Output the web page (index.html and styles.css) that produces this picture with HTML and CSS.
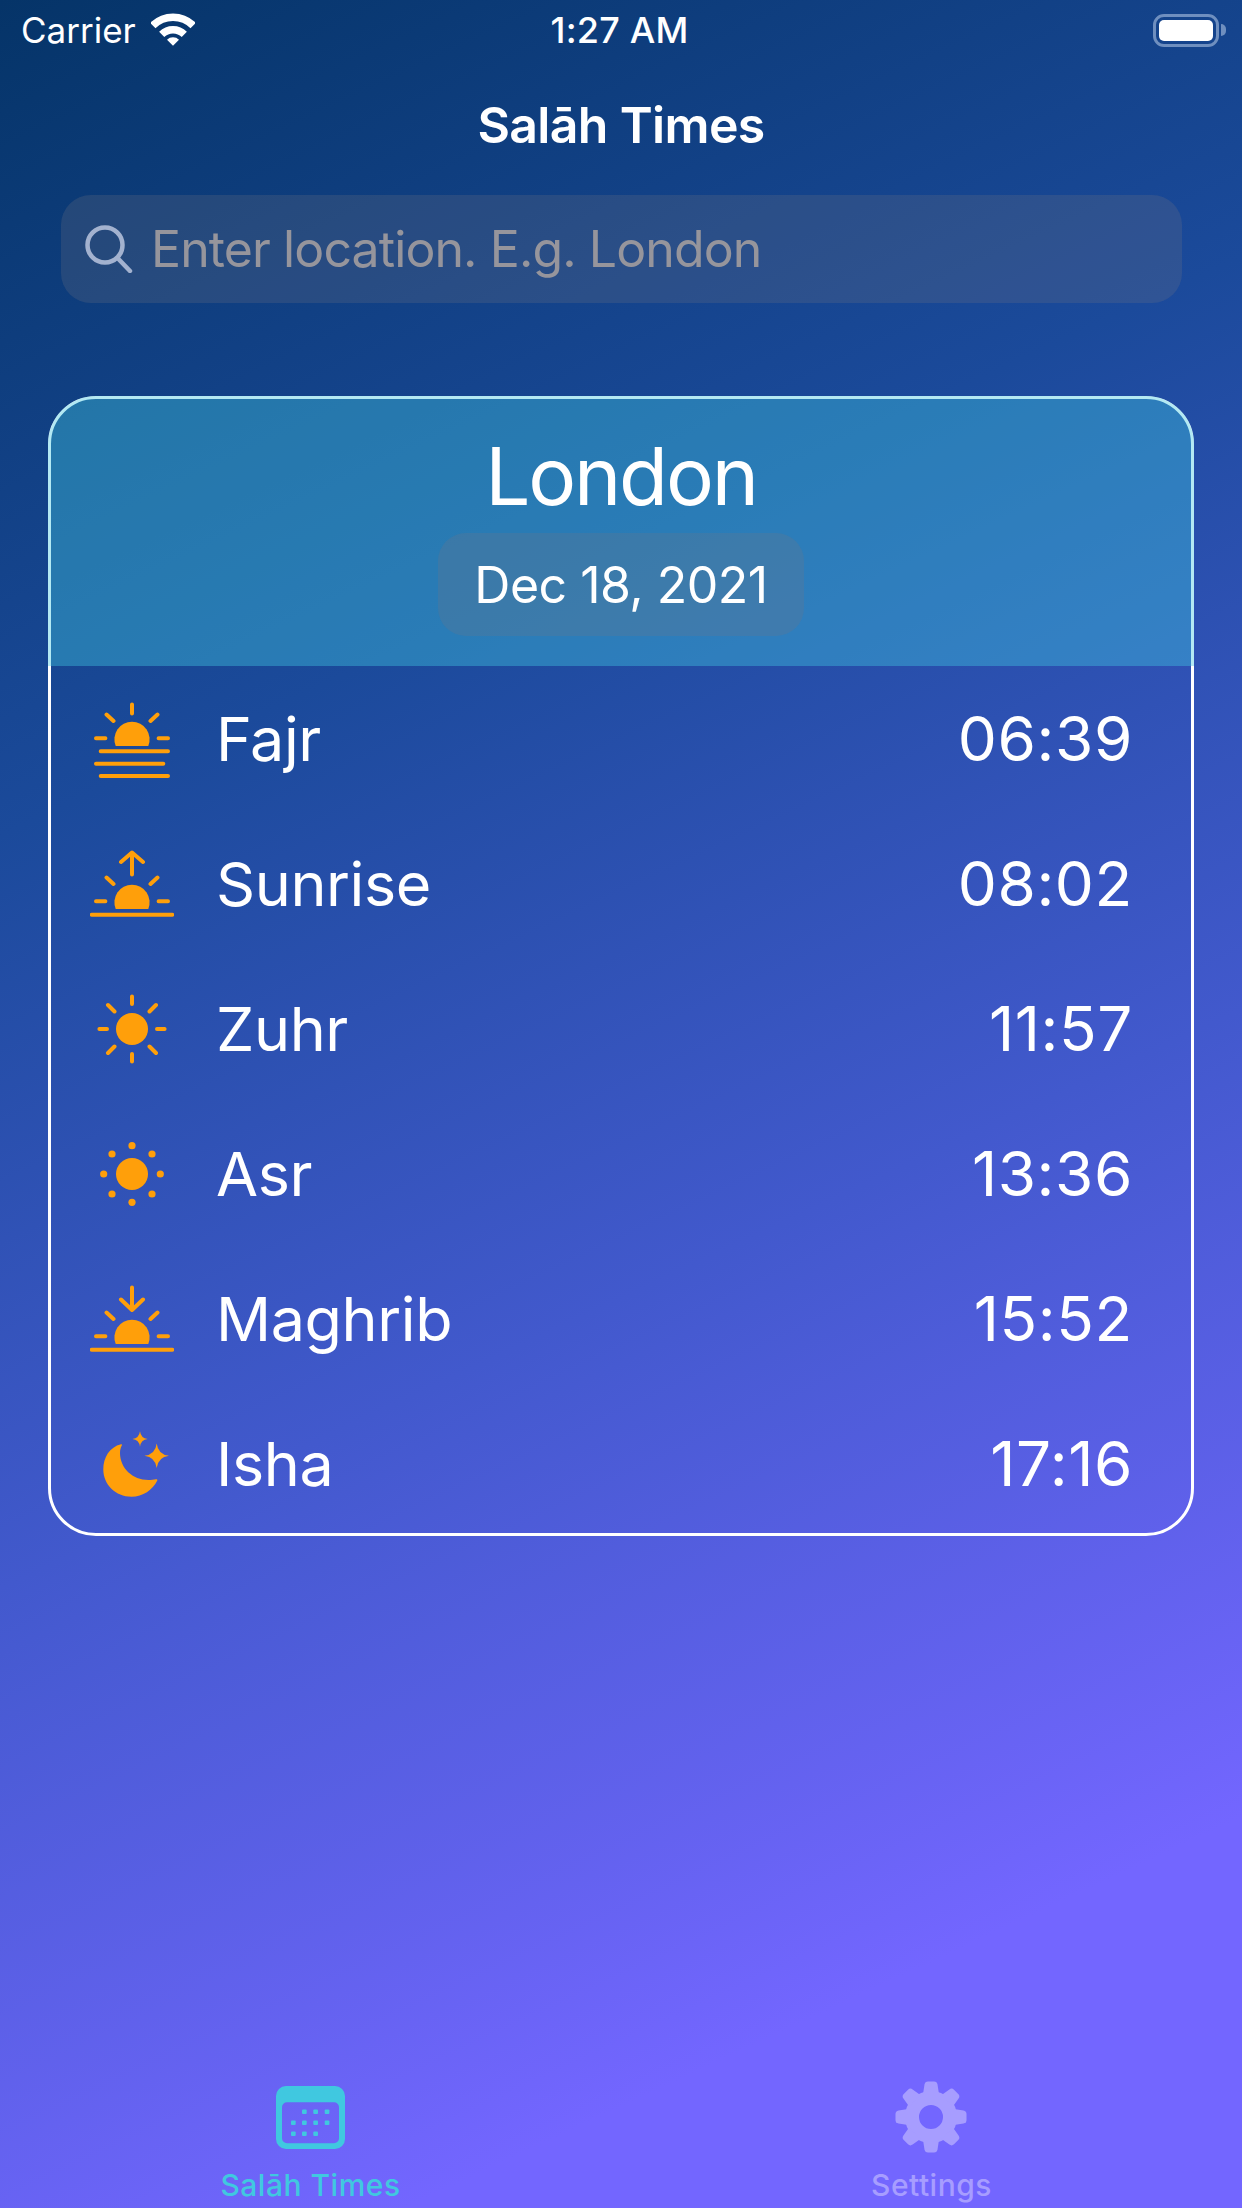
FILE: index.html

```html
<!DOCTYPE html>
<html lang="en">
<head>
  <meta charset="UTF-8">
  <meta name="viewport" content="width=device-width, initial-scale=1.0">
  <title>Salāh Times</title>
  <link rel="stylesheet" href="styles.css">
</head>
<body>
  <div class="status-bar">
    <div class="status-left">
      <span class="carrier">Carrier</span>
      <svg class="wifi" viewBox="0 0 44 33" width="44" height="33">
        <path class="wifi-arc" stroke-width="7.5" d="M1.85 12.55A28.5 28.5 0 0 1 42.15 12.55"/>
        <path class="wifi-arc" stroke-width="7.3" d="M10.7 21.4A16 16 0 0 1 33.3 21.4"/>
        <path class="wifi-dot" d="M22 32.7L16 26.7A8.5 8.5 0 0 1 28 26.7Z"/>
      </svg>
    </div>
    <span class="clock">1:27 AM</span>
    <div class="status-right">
      <div class="battery"><div class="battery-level"></div></div>
      <div class="battery-nub"></div>
    </div>
  </div>

  <header class="nav-title">Salāh Times</header>

  <div class="search">
    <svg class="search-icon" viewBox="0 0 50 48" width="50" height="48">
      <circle cx="22" cy="20" r="17.5"/>
      <path d="M34.5 33L47 46"/>
    </svg>
    <span class="search-text">Enter location. E.g. London</span>
  </div>

  <section class="card">
    <div class="card-head">
      <h1 class="city">London</h1>
      <div class="date">Dec 18, 2021</div>
    </div>

    <div class="row">
      <svg class="prayer-icon" viewBox="0 0 84 84" width="84" height="84">
        <path class="sun" d="M25.7 49A17.6 17.6 0 1 1 58.3 49Z"/>
        <path class="ray" d="M42 7.5V16.5M6 41.3H15.4M68.6 41.3H78M16.5 17.5L23.5 24M67.5 17.5L60.5 24M10.7 54.3H78M6 66.7H73.3M10.7 79H78"/>
      </svg>
      <span class="name">Fajr</span>
      <span class="time">06:39</span>
    </div>

    <div class="row">
      <svg class="prayer-icon" viewBox="0 0 84 84" width="84" height="84">
        <path class="sun" d="M25.7 67A17.6 17.6 0 1 1 58.3 67Z"/>
        <path class="ray" d="M42 11V32.5M31 20L42 10.5L53 20M6 59.3H15.4M68.6 59.3H78M16.5 35.5L23.5 42M67.5 35.5L60.5 42M1.7 72.7H82.3"/>
      </svg>
      <span class="name">Sunrise</span>
      <span class="time">08:02</span>
    </div>

    <div class="row">
      <svg class="prayer-icon" viewBox="0 0 84 84" width="84" height="84">
        <circle class="sun" cx="42" cy="42" r="16"/>
        <path class="ray" d="M42 9.4V17M42 67V74.6M9.4 42H17M67 42H74.6M18 18L24.5 24.5M66 18L59.5 24.5M18 66L24.5 59.5M66 66L59.5 59.5"/>
      </svg>
      <span class="name">Zuhr</span>
      <span class="time">11:57</span>
    </div>

    <div class="row">
      <svg class="prayer-icon" viewBox="0 0 84 84" width="84" height="84">
        <circle class="sun" cx="42" cy="42" r="16"/>
        <g class="sun">
          <circle cx="42" cy="13.7" r="3.6"/>
          <circle cx="42" cy="70.3" r="3.6"/>
          <circle cx="13.7" cy="42" r="3.6"/>
          <circle cx="70.3" cy="42" r="3.6"/>
          <circle cx="22" cy="22" r="3.6"/>
          <circle cx="62" cy="22" r="3.6"/>
          <circle cx="22" cy="62" r="3.6"/>
          <circle cx="62" cy="62" r="3.6"/>
        </g>
      </svg>
      <span class="name">Asr</span>
      <span class="time">13:36</span>
    </div>

    <div class="row">
      <svg class="prayer-icon" viewBox="0 0 84 84" width="84" height="84">
        <path class="sun" d="M25.7 67A17.6 17.6 0 1 1 58.3 67Z"/>
        <path class="ray" d="M42 10.5V33M31 22.5L42 33L53 22.5M6 59.3H15.4M68.6 59.3H78M16.5 35.5L23.5 42M67.5 35.5L60.5 42M1.7 72.7H82.3"/>
      </svg>
      <span class="name">Maghrib</span>
      <span class="time">15:52</span>
    </div>

    <div class="row">
      <svg class="prayer-icon" viewBox="0 0 84 84" width="84" height="84">
        <path class="sun" d="M31 22.3C19.7 25 13.3 35.5 13.3 47.5C13.3 62.5 25.5 74.7 41.5 74.7C53 74.7 62.5 68 67.3 58.5C67.5 57.5 66.8 57 66 57.3C64 57.8 61 58 58.5 58C42.5 58 30 46 30 31C30 28 30.7 25.5 31.8 23.5C32.2 22.6 31.8 22.1 31 22.3Z"/>
        <path class="sun" d="M66.7 21.4Q68 32.4 79 33.7Q68 35 66.7 46Q65.4 35 54.4 33.7Q65.4 32.4 66.7 21.4Z"/>
        <path class="sun" d="M50 9.3Q50.8 16.2 57.7 17Q50.8 17.8 50 24.7Q49.2 17.8 42.3 17Q49.2 16.2 50 9.3Z"/>
      </svg>
      <span class="name">Isha</span>
      <span class="time">17:16</span>
    </div>
  </section>

  <nav class="tabs">
    <div class="tab tab-active">
      <div class="tab-icon">
        <svg viewBox="0 0 69 63" width="69" height="63">
          <path fill-rule="evenodd" d="M10 0H59A10 10 0 0 1 69 10V53A10 10 0 0 1 59 63H10A10 10 0 0 1 0 53V10A10 10 0 0 1 10 0ZM11 16.3A5 5 0 0 0 6 21.3V52.3A5 5 0 0 0 11 57.3H58A5 5 0 0 0 63 52.3V21.3A5 5 0 0 0 58 16.3Z"/>
          <rect x="26" y="23.4" width="4.7" height="4.7" rx="1"/>
          <rect x="37.3" y="23.4" width="4.7" height="4.7" rx="1"/>
          <rect x="48.7" y="23.4" width="4.7" height="4.7" rx="1"/>
          <rect x="15" y="34.4" width="4.7" height="4.7" rx="1"/>
          <rect x="26" y="34.4" width="4.7" height="4.7" rx="1"/>
          <rect x="37.3" y="34.4" width="4.7" height="4.7" rx="1"/>
          <rect x="48.7" y="34.4" width="4.7" height="4.7" rx="1"/>
          <rect x="15" y="45.4" width="4.7" height="4.7" rx="1"/>
          <rect x="26" y="45.4" width="4.7" height="4.7" rx="1"/>
          <rect x="37.3" y="45.4" width="4.7" height="4.7" rx="1"/>
        </svg>
      </div>
      <span class="tab-label">Salāh Times</span>
    </div>
    <div class="tab">
      <div class="tab-icon">
        <svg class="gear" viewBox="0 0 72 72" width="72" height="72">
          <circle class="gear-ring" cx="36" cy="36" r="19" stroke-width="14"/>
          <path id="tooth" d="M28 13L29.5 3.5Q30 0.5 33 0.5H39Q42 0.5 42.5 3.5L44 13Z"/>
          <use href="#tooth" transform="rotate(45 36 36)"/>
          <use href="#tooth" transform="rotate(90 36 36)"/>
          <use href="#tooth" transform="rotate(135 36 36)"/>
          <use href="#tooth" transform="rotate(180 36 36)"/>
          <use href="#tooth" transform="rotate(225 36 36)"/>
          <use href="#tooth" transform="rotate(270 36 36)"/>
          <use href="#tooth" transform="rotate(315 36 36)"/>
        </svg>
      </div>
      <span class="tab-label">Settings</span>
    </div>
  </nav>
</body>
</html>
```

FILE: styles.css

```css
html, body { margin: 0; padding: 0; }
body { width: 1242px; height: 2208px; overflow: hidden; display: flex; flex-direction: column; font-family: 'Inter', 'Liberation Sans', sans-serif; color: white; background: linear-gradient(155deg, #053468 0%, #1b4a9b 30%, #4259cd 57%, #7366ff 86%); }

.status-bar { height: 60px; display: grid; grid-template-columns: 1fr auto 1fr; align-items: center; padding: 0 16px; }
.status-left { display: flex; align-items: center; gap: 15px; margin-left: 5px; }
.status-right { display: flex; align-items: center; justify-content: flex-end; gap: 2px; }
.carrier { font-size: 35px; line-height: 60px; }
.clock { font-size: 36px; line-height: 60px; font-weight: 500; margin-left: -3px; letter-spacing: 0.2px; }
.wifi { margin-top: -1px; }
.wifi-arc { fill: none; stroke: white; }
.wifi-dot { fill: white; }
.battery { width: 66px; height: 33px; box-sizing: border-box; padding: 3px; border: 3px solid #6f8fbf; border-radius: 11px; }
.battery-level { height: 100%; background: white; border-radius: 5px; }
.battery-nub { width: 5px; height: 12px; background: #6f8fbf; border-radius: 0 6px 6px 0; }

.nav-title { height: 135px; line-height: 130px; text-align: center; font-size: 50px; font-weight: 600; letter-spacing: -0.65px; box-sizing: border-box; }

.search { height: 108px; margin: 0 60px 0 61px; display: flex; align-items: center; gap: 18px; padding-left: 22px; background: rgba(118, 118, 128, 0.24); border-radius: 30px; }
.search-icon { fill: none; stroke: #a3b2cf; stroke-width: 4.5; stroke-linecap: round; flex: none; }
.search-text { font-size: 50px; letter-spacing: -0.9px; color: #96959c; }

.card { margin: 93px 48px 0; box-sizing: border-box; height: 1140px; border: 3px solid white; border-radius: 48px; }
.card-head { margin: -3px -3px 0; padding-top: 30px; height: 270px; box-sizing: border-box; background: rgba(64, 200, 224, 0.4); border-radius: 48px 48px 0 0; display: flex; flex-direction: column; align-items: center; }
.city { margin: 0; font-size: 80px; font-weight: 400; line-height: 100px; letter-spacing: -2.2px; }
.date { margin-top: 7px; width: 366px; height: 103px; line-height: 105px; text-align: center; font-size: 50px; letter-spacing: -0.5px; background: rgba(118, 118, 128, 0.24); border-radius: 28px; }

.row { height: 145px; display: flex; align-items: center; padding: 0 58px 0 39px; }
.prayer-icon { flex: none; }
.sun { fill: #ff9f0a; }
.ray { fill: none; stroke: #ff9f0a; stroke-width: 4; stroke-linecap: round; stroke-linejoin: round; }
.name { margin-left: 42px; font-size: 61px; letter-spacing: -0.4px; }
.time { margin-left: auto; font-size: 62px; letter-spacing: 0.6px; }

.tabs { margin-top: auto; display: flex; padding-bottom: 5px; }
.tab { flex: 1; display: flex; flex-direction: column; align-items: center; color: #a79dff; fill: #a79dff; }
.tab-active { color: #40c8e0; fill: #40c8e0; }
.tab-icon { height: 72px; display: flex; align-items: center; }
.tab-icon svg { display: block; }
.gear { margin-left: -1px; }
.gear-ring { fill: none; stroke: #a79dff; }
.tab-label { margin-top: 14px; font-size: 30px; line-height: 36px; font-weight: 500; letter-spacing: 0.5px; }
```
